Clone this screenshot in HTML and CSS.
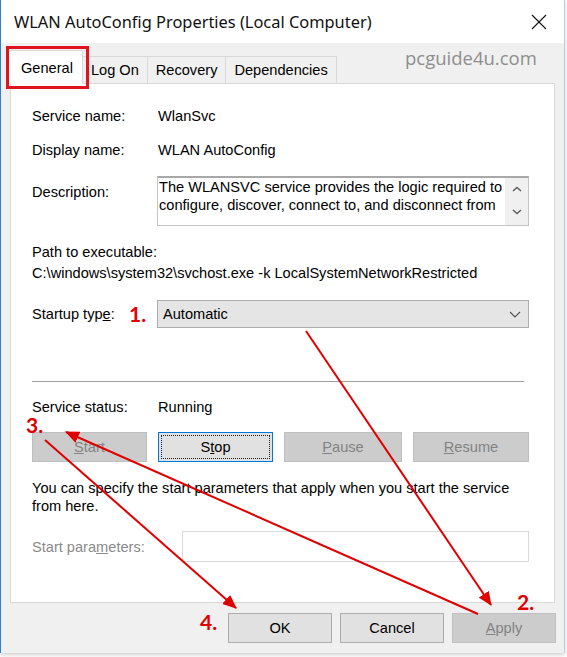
FILE: index.html
```html
<!DOCTYPE html>
<html>
<head>
<meta charset="utf-8">
<title>WLAN AutoConfig Properties</title>
<link rel="stylesheet" href="styles.css">
</head>
<body>
<div class="window">
  <div class="titlebar">
    <span class="title">WLAN AutoConfig Properties (Local Computer)</span>
    <svg class="close" width="16" height="16" viewBox="0 0 16 16"><path d="M1 1L15 15M15 1L1 15" stroke="#111" stroke-width="1.1" fill="none"/></svg>
  </div>
  <div class="dialog">
    <div class="tabs">
      <div class="tab active">General</div>
      <div class="tab">Log On</div>
      <div class="tab">Recovery</div>
      <div class="tab">Dependencies</div>
    </div>
    <div class="panel">
      <div class="row r1"><span class="lbl">Service name:</span><span>WlanSvc</span></div>
      <div class="row r2"><span class="lbl">Display name:</span><span>WLAN AutoConfig</span></div>
      <div class="row desc"><span class="lbl">Description:</span>
        <div class="textarea">
          <div class="ta-text">The WLANSVC service provides the logic required to configure, discover, connect to, and disconnect from</div>
          <div class="scroll">
            <svg width="10" height="6" viewBox="0 0 10 6"><path d="M1 5L5 1.5L9 5" stroke="#606060" stroke-width="1.6" fill="none"/></svg>
            <svg width="10" height="6" viewBox="0 0 10 6"><path d="M1 1L5 4.5L9 1" stroke="#606060" stroke-width="1.6" fill="none"/></svg>
          </div>
        </div>
      </div>
      <div class="path-lbl">Path to executable:</div>
      <div class="path-val">C:\windows\system32\svchost.exe -k LocalSystemNetworkRestricted</div>
      <div class="row startup"><span class="lbl">Startup typ<u>e</u>:</span>
        <div class="select"><span>Automatic</span>
          <svg width="12" height="7" viewBox="0 0 12 7"><path d="M1 1L6 6L11 1" stroke="#555" stroke-width="1.2" fill="none"/></svg>
        </div>
      </div>
      <div class="sep"></div>
      <div class="row status"><span class="lbl">Service status:</span><span>Running</span></div>
      <div class="svc-buttons">
        <button class="btn disabled"><u>S</u>tart</button>
        <button class="btn focused"><span class="focus-ring">S<u>t</u>op</span></button>
        <button class="btn disabled"><u>P</u>ause</button>
        <button class="btn disabled"><u>R</u>esume</button>
      </div>
      <p class="hint">You can specify the start parameters that apply when you start the service from here.</p>
      <div class="row params"><span class="lbl-dis">Start para<u>m</u>eters:</span><div class="input"></div></div>
    </div>
    <div class="footer">
      <button class="btn fbtn">OK</button>
      <button class="btn fbtn">Cancel</button>
      <button class="btn fbtn disabled"><u>A</u>pply</button>
    </div>
  </div>
</div>

<div class="watermark">pcguide4u.com</div>
<div class="redbox"></div>
<svg class="annot" width="567" height="657" viewBox="0 0 567 657">
  <defs>
    <marker id="ah" markerWidth="7" markerHeight="6" refX="6.5" refY="3" orient="auto" markerUnits="strokeWidth">
      <path d="M0 0L7 3L0 6Z" fill="#e00000"/>
    </marker>
  </defs>
  <line x1="306" y1="331" x2="491" y2="605" stroke="#e00000" stroke-width="2" marker-end="url(#ah)"/>
  <line x1="478" y1="614" x2="66" y2="432" stroke="#e00000" stroke-width="2" marker-end="url(#ah)"/>
  <line x1="45" y1="440" x2="236" y2="608" stroke="#e00000" stroke-width="2" marker-end="url(#ah)"/>
</svg>
<div class="num n1">1.</div>
<div class="num n2">2.</div>
<div class="num n3">3.</div>
<div class="num n4">4.</div>
</body>
</html>
```

FILE: styles.css
```css
* { box-sizing: border-box; }
body {
  margin: 0;
  background: #ffffff;
  font-family: "Liberation Sans", Arial, sans-serif;
  font-size: 14.6px;
  color: #000;
  width: 567px;
  height: 657px;
  position: relative;
  overflow: hidden;
}
.window {
  width: 565px;
  height: 653px;
  border-left: 1px solid #2f7fd0;
  border-right: 1px solid #b9cde3;
  box-shadow: 0 2px 4px rgba(0,0,0,0.18);
  display: flex;
  flex-direction: column;
}
.titlebar {
  height: 43px;
  background: #fff;
  display: flex;
  align-items: center;
  padding: 0 16px 0 13px;
}
.title {
  flex: 1;
  font-family: "Noto Sans", "Open Sans", sans-serif;
  font-size: 16.4px;
  color: #111;
  padding-bottom: 1px;
}
.close { margin-right: 1px; }
.dialog {
  flex: 1;
  background: #f0f0f0;
  padding: 7px 9px 0 9px;
  display: flex;
  flex-direction: column;
}
.tabs {
  display: flex;
  align-items: flex-end;
  height: 33px;
  margin-left: -2px;
}
.tab {
  height: 27px;
  padding: 0 8px;
  border: 1px solid #d9d9d9;
  border-bottom: none;
  background: #f0f0f0;
  display: flex;
  align-items: center;
  margin-left: -1px;
}
.tab.active {
  height: 34px;
  margin-left: 0;
  margin-bottom: -1px;
  padding: 0 9px 0 12px;
  background: #fff;
  position: relative;
  z-index: 1;
}
.panel {
  height: 520px;
  background: #fff;
  border: 1px solid #d9d9d9;
  padding: 24px 0 0 21px;
  display: flex;
  flex-direction: column;
  align-items: flex-start;
  line-height: 16px;
}
.row { display: flex; align-items: center; }
.lbl { width: 126px; flex: none; }
.r2 { margin-top: 18px; }
.desc { margin-top: 18px; align-items: flex-start; }
.desc .lbl { padding-top: 8px; }
.textarea {
  margin-left: -1px;
  width: 372px;
  height: 50px;
  border: 1px solid #c4c4c4;
  border-top: 2px solid #a8a8a8;
  display: flex;
}
.ta-text {
  flex: 1;
  padding: 0 0 0 1px;
  line-height: 18px;
  overflow: hidden;
}
.scroll {
  width: 23px;
  flex: none;
  background: #f0f0f0;
  display: flex;
  flex-direction: column;
  align-items: center;
  justify-content: space-between;
  padding: 8px 0 10px;
}
.path-lbl { margin-top: 18px; }
.path-val { margin-top: 5px; }
.startup { margin-top: 19px; }
.select {
  margin-left: -1px;
  width: 372px;
  height: 28px;
  background: #e5e5e5;
  border: 1px solid #acacac;
  display: flex;
  align-items: center;
  justify-content: space-between;
  padding: 0 7px 0 5px;
}
.sep {
  margin-top: 53px;
  width: 492px;
  height: 2px;
  border-top: 1px solid #a0a0a0;
  border-bottom: 1px solid #fff;
}
.status { margin-top: 16px; }
.svc-buttons {
  margin-top: 17px;
  display: grid;
  grid-template-columns: 115px 115px 118px 116px;
  column-gap: 11px;
}
.btn {
  height: 30px;
  background: #e1e1e1;
  border: 1px solid #adadad;
  font-family: "Liberation Sans", Arial, sans-serif;
  font-size: 14.6px;
  color: #000;
  padding: 0;
  display: flex;
  align-items: center;
  justify-content: center;
}
.btn.disabled {
  background: #cccccc;
  border-color: #bfbfbf;
  color: #838383;
}
.btn.focused {
  border: 1px solid #0078d7;
  padding: 2px;
}
.focus-ring {
  width: 100%;
  height: 100%;
  border: 1px dotted #222;
  display: flex;
  align-items: center;
  justify-content: center;
}
.hint {
  margin: 17px 0 0;
  width: 497px;
  line-height: 18px;
}
.params { margin-top: 16px; }
.lbl-dis { width: 150px; color: #8a8a8a; flex: none; }
.input {
  width: 347px;
  height: 31px;
  background: #fff;
  border: 1px solid #d9d9d9;
}
.footer {
  margin-top: 10px;
  display: flex;
  justify-content: flex-end;
  gap: 8px;
  margin-right: -1px;
}
.fbtn { width: 104px; }

/* annotations overlay */
.watermark {
  position: absolute;
  left: 405px;
  top: 45px;
  font-family: "Open Sans", "Noto Sans", sans-serif;
  font-size: 18.5px;
  color: #8e8e8e;
}
.redbox {
  position: absolute;
  left: 6px;
  top: 46px;
  width: 83px;
  height: 43px;
  border: 3px solid #e0141e;
  z-index: 3;
}
.annot {
  position: absolute;
  left: 0;
  top: 0;
  pointer-events: none;
  z-index: 4;
}
.num {
  position: absolute;
  font-family: "Lato", "Liberation Sans", sans-serif;
  font-weight: 700;
  font-size: 21px;
  line-height: 1;
  color: #e00000;
  z-index: 5;
}
.n1 { left: 129px; top: 303px; }
.n2 { left: 517px; top: 591px; }
.n3 { left: 26px; top: 414px; }
.n4 { left: 200px; top: 611px; }
```
